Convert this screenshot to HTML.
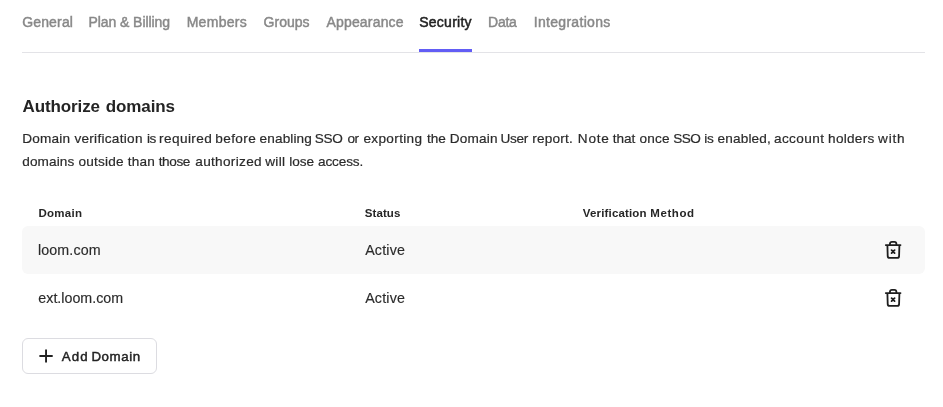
<!DOCTYPE html>
<html lang="en">
<head>
<meta charset="utf-8">
<title>Security settings</title>
<style>
  html, body { margin: 0; padding: 0; background: #fff; }
  body { width: 943px; height: 407px; position: relative; overflow: hidden;
         font-family: "Liberation Sans", Arial, sans-serif; color: #2c2c2c; }
  .t { position: absolute; white-space: nowrap; margin: 0; }
  .layer { position: absolute; left: 0; top: 0; width: 943px; height: 407px; will-change: transform; }
  .grp { position: absolute; left: 0; top: 0; margin: 0; font-size: 14px; color: transparent; }
  .tabline { position: absolute; left: 22px; top: 52px; width: 903px; height: 1px; background: #e3e3e7; }
  .activebar { position: absolute; left: 419px; top: 49px; width: 53px; height: 3px; background: #625df5; }
  .row { position: absolute; left: 22px; width: 903px; height: 48px; border-radius: 6px; }
  .row.shade { background: #f8f8f8; }
  .trash { position: absolute; left: 881px; }
  .btn { position: absolute; left: 22px; top: 338px; width: 133px; height: 34px; border: 1px solid #dcdce1; border-radius: 6px; background: #fff; }
  .plus { position: absolute; left: 38px; top: 348px; }
  .c0 { top:13.15px; font-size:14px; line-height:18px; font-weight:400; color:#888; -webkit-text-stroke:0.45px #888; }
  .c1 { top:13.15px; font-size:14px; line-height:18px; font-weight:400; color:#222; -webkit-text-stroke:0.5px #222; }
  .c2 { top:95.71px; font-size:17px; line-height:22px; font-weight:700; color:#242424; }
  .c3 { top:129.99px; font-size:13.6px; line-height:18px; font-weight:400; color:#2b2b2b; -webkit-text-stroke:0.2px #2b2b2b; }
  .c4 { top:152.99px; font-size:13.6px; line-height:18px; font-weight:400; color:#2b2b2b; -webkit-text-stroke:0.2px #2b2b2b; }
  .c5 { top:206.02px; font-size:11.5px; line-height:14px; font-weight:700; color:#262626; }
  .c6 { top:241.16px; font-size:14.25px; line-height:18px; font-weight:400; color:#2b2b2b; -webkit-text-stroke:0.15px #2b2b2b; }
  .c7 { top:289.16px; font-size:14.25px; line-height:18px; font-weight:400; color:#2b2b2b; -webkit-text-stroke:0.15px #2b2b2b; }
  .c8 { top:347.69px; font-size:13.3px; line-height:18px; font-weight:400; color:#222; -webkit-text-stroke:0.45px #222; }
</style>
</head>
<body>
  <div class="tabline"></div>
  <div class="activebar"></div>
  <div class="row shade" style="top:226px"></div>
  <div class="btn"></div>
  <svg class="plus" width="16" height="16" viewBox="0 0 16 16" fill="none" stroke="#222" stroke-width="1.900"><path d="M8.050 1.500v13.100M1.400 8.050h13.300"/></svg>
  <svg class="trash" style="top:238px" width="24" height="24" viewBox="0 0 24 24" fill="none" stroke="#1e1e1e" stroke-width="1.8" stroke-linecap="round" stroke-linejoin="round"><path d="M4.800 7.100H19.500M8.900 7.100V5.900a2 2 0 0 1 2-2h2.500a2 2 0 0 1 2 2V7.100M6.400 7.100l.3 10.800a2 2 0 0 0 2 2h7.400a2 2 0 0 0 2-2l.3-10.800M10.600 12.100l3 3M13.600 12.100l-3 3"/></svg>
  <svg class="trash" style="top:286px" width="24" height="24" viewBox="0 0 24 24" fill="none" stroke="#1e1e1e" stroke-width="1.8" stroke-linecap="round" stroke-linejoin="round"><path d="M4.800 7.100H19.500M8.900 7.100V5.900a2 2 0 0 1 2-2h2.500a2 2 0 0 1 2 2V7.100M6.400 7.100l.3 10.800a2 2 0 0 0 2 2h7.400a2 2 0 0 0 2-2l.3-10.800M10.600 12.100l3 3M13.600 12.100l-3 3"/></svg>
  <div class="layer">
  <div class="t c0" id="tab1" style="left:22.17px;letter-spacing:0.166px">General</div>
  <div class="t c0" id="tab2" style="left:88.46px;letter-spacing:-0.067px">Plan &amp; Billing</div>
  <div class="t c0" id="tab3" style="left:186.68px;letter-spacing:0.291px">Members</div>
  <div class="t c0" id="tab4" style="left:263.61px;letter-spacing:0.009px">Groups</div>
  <div class="t c0" id="tab5" style="left:326.45px;letter-spacing:0.180px">Appearance</div>
  <div class="t c1" id="tab6" style="left:419.22px;letter-spacing:0.252px">Security</div>
  <div class="t c0" id="tab7" style="left:488.04px;letter-spacing:-0.257px">Data</div>
  <div class="t c0" id="tab8" style="left:533.72px;letter-spacing:0.307px">Integrations</div>
  <h2 class="grp" id="h"><span class="t c2" id="hw0" style="left:22.62px;letter-spacing:-0.120px">Authorize</span> <span class="t c2" id="hw1" style="left:105.84px;letter-spacing:-0.114px">domains</span> </h2>
  <p class="grp" id="p1"><span class="t c3" id="p1w0" style="left:22.17px;letter-spacing:0.209px">Domain</span> <span class="t c3" id="p1w1" style="left:74.39px;letter-spacing:0.284px">verification</span> <span class="t c3" id="p1w2" style="left:147.06px;letter-spacing:-0.487px">is</span> <span class="t c3" id="p1w3" style="left:159.01px;letter-spacing:0.422px">required</span> <span class="t c3" id="p1w4" style="left:215.24px;letter-spacing:0.411px">before</span> <span class="t c3" id="p1w5" style="left:259.61px;letter-spacing:0.112px">enabling</span> <span class="t c3" id="p1w6" style="left:314.63px;letter-spacing:-0.199px">SSO</span> <span class="t c3" id="p1w7" style="left:347.52px;letter-spacing:-0.611px">or</span> <span class="t c3" id="p1w8" style="left:363.43px;letter-spacing:0.342px">exporting</span> <span class="t c3" id="p1w9" style="left:427.01px;letter-spacing:-0.103px">the</span> <span class="t c3" id="p1w10" style="left:449.74px;letter-spacing:0.196px">Domain</span> <span class="t c3" id="p1w11" style="left:500.56px;letter-spacing:-0.328px">User</span> <span class="t c3" id="p1w12" style="left:532.26px;letter-spacing:0.218px">report.</span> <span class="t c3" id="p1w13" style="left:577.87px;letter-spacing:0.741px">Note</span> <span class="t c3" id="p1w14" style="left:612.70px;letter-spacing:-0.039px">that</span> <span class="t c3" id="p1w15" style="left:639.43px;letter-spacing:0.212px">once</span> <span class="t c3" id="p1w16" style="left:673.31px;letter-spacing:-0.579px">SSO</span> <span class="t c3" id="p1w17" style="left:704.36px;letter-spacing:-0.377px">is</span> <span class="t c3" id="p1w18" style="left:717.43px;letter-spacing:0.187px">enabled,</span> <span class="t c3" id="p1w19" style="left:773.91px;letter-spacing:0.419px">account</span> <span class="t c3" id="p1w20" style="left:828.09px;letter-spacing:0.260px">holders</span> <span class="t c3" id="p1w21" style="left:878.00px;letter-spacing:0.825px">with</span> </p>
  <p class="grp" id="p2"><span class="t c4" id="p2w0" style="left:22.26px;letter-spacing:0.098px">domains</span> <span class="t c4" id="p2w1" style="left:78.59px;letter-spacing:0.199px">outside</span> <span class="t c4" id="p2w2" style="left:127.75px;letter-spacing:0.228px">than</span> <span class="t c4" id="p2w3" style="left:158.75px;letter-spacing:-0.404px">those</span> <span class="t c4" id="p2w4" style="left:195.27px;letter-spacing:0.318px">authorized</span> <span class="t c4" id="p2w5" style="left:265.16px;letter-spacing:0.318px">will</span> <span class="t c4" id="p2w6" style="left:289.15px;letter-spacing:-0.017px">lose</span> <span class="t c4" id="p2w7" style="left:318.07px;letter-spacing:-0.154px">access.</span> </p>
  <div class="t c5" id="th1" style="left:38.52px;letter-spacing:0.264px">Domain</div>
  <div class="t c5" id="th2" style="left:364.73px;letter-spacing:0.101px">Status</div>
  <div class="grp" id="th3"><span class="t c5" id="th3w0" style="left:582.82px;letter-spacing:0.160px">Verification</span> <span class="t c5" id="th3w1" style="left:650.22px;letter-spacing:0.604px">Method</span> </div>
  <div class="t c6" id="td1" style="left:37.98px;letter-spacing:0.124px">loom.com</div>
  <div class="t c6" id="td2" style="left:365.13px;letter-spacing:0.192px">Active</div>
  <div class="t c7" id="td3" style="left:38.34px;letter-spacing:0.006px">ext.loom.com</div>
  <div class="t c7" id="td4" style="left:365.13px;letter-spacing:0.192px">Active</div>
  <div class="grp" id="btnt"><span class="t c8" id="btntw0" style="left:61.70px;letter-spacing:1.128px">Add</span> <span class="t c8" id="btntw1" style="left:91.38px;letter-spacing:0.591px">Domain</span> </div>
  </div>
</body>
</html>
